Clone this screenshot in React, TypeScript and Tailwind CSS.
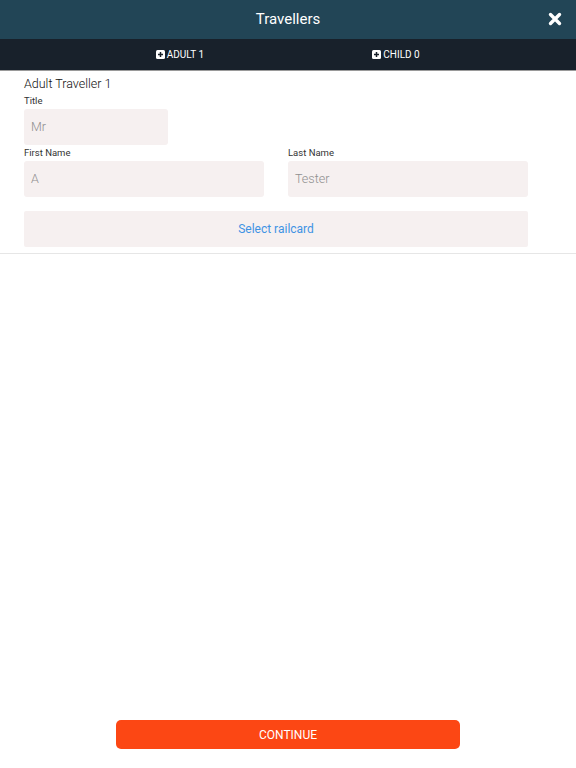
import React from "react";

function PlusSquare() {
  return (
    <svg width="9" height="9" viewBox="0 0 9 9" className="shrink-0">
      <rect x="0" y="0" width="9" height="9" rx="1.5" fill="#ffffff" />
      <rect x="2" y="3.75" width="5" height="1.5" fill="#18212b" />
      <rect x="3.75" y="2" width="1.5" height="5" fill="#18212b" />
    </svg>
  );
}

function CloseIcon() {
  return (
    <svg width="14" height="14" viewBox="0 0 14 14">
      <path d="M2.5 2.5 L11.5 11.5 M11.5 2.5 L2.5 11.5" stroke="#ffffff" strokeWidth="3.4" strokeLinecap="round" />
    </svg>
  );
}

function Field({ label, value, className }: { label: string; value: string; className?: string }) {
  return (
    <div className={className}>
      <div className="text-[9.5px] leading-[12px] text-[#333333] mb-[2px]">{label}</div>
      <div className="h-[36px] bg-[#f6f0f0] rounded-[3px] flex items-center px-[7px] text-[12.5px] font-light text-[#8f8f8f]">{value}</div>
    </div>
  );
}

export default function App() {
  return (
    <div className="h-[768px] w-[576px] bg-white flex flex-col" style={{ fontFamily: "Roboto, 'Liberation Sans', sans-serif" }}>
      <div className="h-[39px] bg-[#224556] flex items-center justify-center relative shrink-0">
        <span className="text-white text-[15px]">Travellers</span>
        <div className="absolute right-[14px] top-[12px]">
          <CloseIcon />
        </div>
      </div>
      <div className="h-[31px] bg-[#18212b] flex justify-center shrink-0">
        <div className="w-[432px] grid grid-cols-2">
          <div className="flex items-center justify-center gap-[2px] text-white text-[10px]">
            <PlusSquare />
            <span>ADULT 1</span>
          </div>
          <div className="flex items-center justify-center gap-[2px] text-white text-[10px]">
            <PlusSquare />
            <span>CHILD 0</span>
          </div>
        </div>
      </div>
      <div className="h-[1px] bg-[#9a9a9a] shrink-0" />
      <div className="px-[24px] pt-[5px] pb-[6px] border-b border-[#e6e6e6] shrink-0">
        <div className="text-[12.5px] leading-[16px] font-light text-[#111111] mb-[3px]">Adult Traveller 1</div>
        <Field label="Title" value="Mr" className="w-[144px]" />
        <div className="flex gap-[24px] mt-[2px] w-[504px]">
          <Field label="First Name" value="A" className="flex-1" />
          <Field label="Last Name" value="Tester" className="flex-1" />
        </div>
        <div className="mt-[14px] w-[504px] h-[36px] bg-[#f6f0f0] rounded-[2px] flex items-center justify-center text-[12px] text-[#3f93e4]">
          Select railcard
        </div>
      </div>
      <div className="flex-1" />
      <div className="flex justify-center pb-[19px] shrink-0">
        <div className="w-[344px] h-[29px] bg-[#fc4714] rounded-[5px] flex items-center justify-center text-white text-[12px]">
          CONTINUE
        </div>
      </div>
    </div>
  );
}
